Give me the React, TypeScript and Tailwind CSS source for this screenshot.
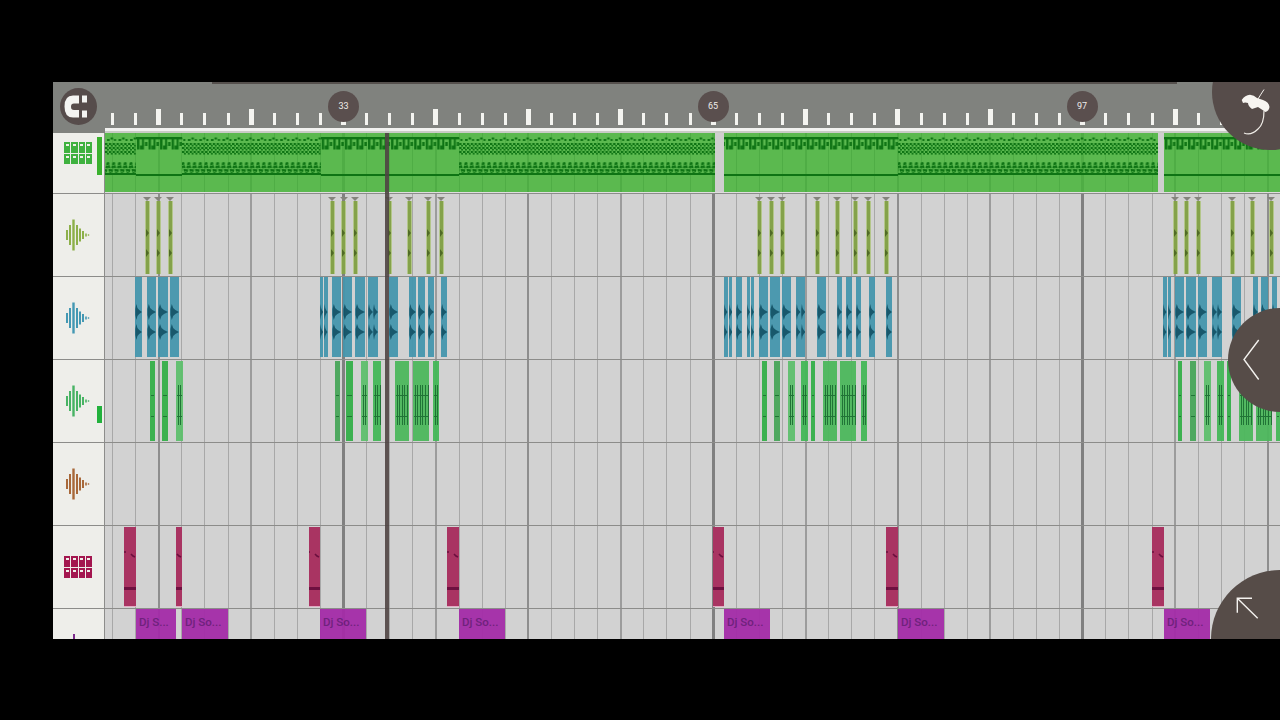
type Clip = [number, number, string?];

const BAR = 23.1;
const ORIGIN = 343.5;
const LANE_X = 105;

const gridIndexes = Array.from({ length: 51 }, (_, i) => i - 10);
const gridX = (k: number) => ORIGIN + BAR * k;

// x ranges are page pixels, converted to lane offsets when drawn
const kickX = [147, 158, 170, 332, 343.5, 355, 389, 409, 428, 441, 759, 771, 782, 817, 837, 855, 868, 886, 1175, 1186.5, 1198, 1232, 1252, 1271];

const blueClips: Clip[] = [
  [135, 142], [147, 156], [158, 168], [170, 179],
  [320, 323.2], [324, 327.5], [332, 341], [343, 352], [354.5, 364.5], [368, 373], [373, 378], [389, 398], [409, 416], [418, 425], [428, 434], [441, 447],
  [724, 727.5], [728.5, 732], [736, 742], [747, 750], [751, 754], [759, 768], [770, 780], [782, 791], [796, 800.5], [800.5, 805], [817, 826], [837, 842], [846, 852], [856, 861], [869, 875], [886, 892],
  [1163, 1166.5], [1167.5, 1170.5], [1175, 1184], [1186, 1196], [1198, 1207], [1212, 1217], [1217, 1222], [1232, 1241], [1253, 1258], [1261, 1268], [1272, 1277],
];

const greenClips: Clip[] = [
  [150, 154.5, 'a'], [162, 168, 'a'], [176, 183, 'l'],
  [335, 340, 'd'], [346, 353, 'a'], [361, 368, 'l'], [373, 381, 'h'], [395, 409, 'w'], [413, 429, 'w'], [433, 439, 'h'],
  [762, 767, 'a'], [774, 780, 'd'], [788, 795, 'l'], [801, 808, 'h'], [811, 815, 'a'], [823, 837, 'w'], [840, 856, 'w'], [861, 867, 'h'],
  [1178, 1182, 'a'], [1190, 1196, 'd'], [1204, 1211, 'l'], [1217, 1224, 'h'], [1227, 1231, 'a'], [1239, 1253, 'w'], [1256, 1272, 'w'], [1276, 1280, 'h'],
];

const pinkClips: Clip[] = [[124, 136], [176, 182], [309, 320], [447, 459], [713, 724], [886, 898], [1152, 1164]];

const purpleClips: Clip[] = [
  [136, 176, 'Dj S...'], [182, 228, 'Dj So...'], [320, 366, 'Dj So...'], [459, 505, 'Dj So...'],
  [724, 770, 'Dj So...'], [898, 944, 'Dj So...'], [1164, 1210, 'Dj So...'],
];

const greenTone: Record<string, string> = {
  a: 'bg-[#35b04a]',
  d: 'bg-[#48a65a]',
  l: 'bg-[#5fc06d]',
  h: 'bg-[#44b858]',
  w: 'bg-[#4db85d]',
};

const Waveform = ({ color }: { color: string }) => {
  const bars = [[1, 10, 2], [4, 20, 2], [7.5, 31, 2.4], [11, 20, 2], [14, 13, 2], [17, 8, 2], [20, 3, 1.6], [22.5, 1.5, 1.4]];
  return (
    <svg width="24" height="32" viewBox="0 0 24 32" className="ml-[13px]">
      {bars.map(([x, h, w]) => (
        <rect key={x} x={x - w / 2} y={16 - h / 2} width={w} height={h} fill={color} />
      ))}
    </svg>
  );
};

const PadGrid = ({ color }: { color: string }) => (
  <div className="ml-[11px] grid w-[28px] grid-cols-4 gap-[1px]">
    {Array.from({ length: 8 }, (_, i) => (
      <div key={i} className={`flex h-[10.5px] justify-center pt-[2px] ${color}`}>
        <div className="h-[2px] w-[3px] bg-[#f0f0ea]" />
      </div>
    ))}
  </div>
);

const GridLines = ({ green = false }: { green?: boolean }) => (
  <>
    {gridIndexes.map((k) => {
      const major = k % 16 === 0;
      const half = k % 8 === 0;
      const quarter = k % 4 === 0;
      const width = major ? 3 : half || quarter ? 2 : 1;
      const base = green
        ? 'bg-[#3e9c36]/40'
        : major
          ? 'bg-[#808080]'
          : half
            ? 'bg-[#8e8e8e]'
            : quarter
              ? 'bg-[#9c9c9c]'
              : 'bg-[#a8a8a8]';
      return (
        <div
          key={k}
          className={`absolute top-0 bottom-0 ${base}`}
          style={{ left: gridX(k) - LANE_X - width / 2, width }}
        />
      );
    })}
  </>
);

const Spike = () => (
  <svg width="100%" height="16" viewBox="0 0 10 16" preserveAspectRatio="none" className="block">
    <path d="M2 0 L3.5 4 L6 6 L10 8 L6 10 L3.5 12 L2 16 L0.5 11 L0.5 5 Z" fill="#0f5267" />
  </svg>
);

const KickClip = ({ x }: { x: number }) => (
  <div className="absolute top-[3px] flex h-[77px] w-[8px] flex-col items-center" style={{ left: x - LANE_X - 4 }}>
    <div className="h-0 w-0 border-x-[4px] border-t-[4px] border-x-transparent border-t-[#84847c]" />
    <div className="relative h-[73px] w-[5px] border-x border-[#b3c68a] bg-[#84a24a]">
      <div className="absolute top-[28px] left-0 h-0 w-0 border-y-[4px] border-l-[3px] border-y-transparent border-l-[#4f6a26]" />
      <div className="absolute top-[48px] left-0 h-0 w-0 border-y-[4px] border-l-[3px] border-y-transparent border-l-[#4f6a26]" />
    </div>
  </div>
);

const BlueClip = ({ from, to }: { from: number; to: number }) => (
  <div
    className="absolute top-0 flex h-[80px] flex-col bg-[#4597ae] pt-[27px] opacity-95"
    style={{ left: from - LANE_X, width: to - from }}
  >
    <Spike />
    <div className="h-[4px]" />
    <Spike />
  </div>
);

const GreenClip = ({ from, to, tone }: { from: number; to: number; tone: string }) => {
  const hatched = to - from > 5 && tone !== 'a' && tone !== 'd';
  const lines = hatched ? Array.from({ length: Math.floor((to - from) / 2.6) }, (_, i) => i) : [];
  return (
    <div
      className={`absolute top-[1px] h-[80px] opacity-95 ${greenTone[tone]}`}
      style={{ left: from - LANE_X, width: to - from }}
    >
      {lines.map((i) => (
        <div key={i} className="absolute top-[24px] h-[40px] w-[1px] bg-[#17702e]" style={{ left: 1.5 + i * 2.6 }} />
      ))}
      <div className="absolute top-[34px] left-[1px] right-[1px] h-[1px] bg-[#17702e]" />
      <div className="absolute top-[55px] left-[1px] right-[1px] h-[1px] bg-[#17702e]" />
    </div>
  );
};

const PinkClip = ({ from, to }: { from: number; to: number }) => (
  <div
    className="absolute top-[1px] h-[80px] border-b border-[#e3a9c2] bg-[#a93462]"
    style={{ left: from - LANE_X, width: to - from }}
  >
    <svg width="100%" height="8" viewBox="0 0 12 8" preserveAspectRatio="xMaxYMid slice" className="absolute top-[24px] left-0">
      <path d="M0 1 L2 1 M7 3 L9 5 L11 6" stroke="#6b0f3e" strokeWidth="1.6" fill="none" />
    </svg>
    <div className="absolute top-[60px] left-0 right-0 h-[3px] bg-[#6e1040]" />
  </div>
);

const PurpleClip = ({ from, to, label }: { from: number; to: number; label: string }) => (
  <div
    className="absolute top-0 bottom-0 bg-[#a42ca8] pt-[5px] pl-[3px] font-['Roboto',sans-serif] text-[11.5px] leading-[16px] font-medium whitespace-nowrap text-[#6a1878] opacity-95"
    style={{ left: from - LANE_X, width: to - from }}
  >
    {label}
  </div>
);

const Side = ({ children }: { children?: React.ReactNode }) => (
  <div className="relative flex w-[52px] shrink-0 items-center border-r border-[#8d8d8b] bg-[#eeeeea]">{children}</div>
);

const Row = ({ side, children, height }: { side?: React.ReactNode; children?: React.ReactNode; height: string }) => (
  <div className={`flex shrink-0 border-b border-[#8c8c8a] ${height}`}>
    <Side>{side}</Side>
    <div className="relative flex-1 overflow-hidden bg-[#d2d2d2]">
      <GridLines />
      {children}
    </div>
  </div>
);

const SongTrack = () => (
  <svg width="1175" height="59" className="absolute top-0 left-0 block">
    <defs>
      <pattern id="tone" x="31" y="0" width="11.55" height="20" patternUnits="userSpaceOnUse">
        <rect x="0" y="4" width="11.55" height="2.4" fill="#0e7414" />
        <rect x="1" y="6" width="2.4" height="10.5" fill="#0e7414" />
        <rect x="6" y="6" width="2" height="7" fill="#0e7414" />
        <rect x="4" y="12.5" width="4" height="4" fill="#0e7414" />
        <rect x="9" y="9" width="2.4" height="4" fill="#0e7414" />
      </pattern>
      <pattern id="dots" x="0" y="0" width="11.55" height="10" patternUnits="userSpaceOnUse">
        <rect x="2" y="6" width="2.6" height="2" fill="#0e7414" />
        <rect x="5.5" y="4.5" width="2.6" height="2" fill="#0e7414" />
        <rect x="9" y="6" width="2" height="2" fill="#0e7414" />
      </pattern>
      <pattern id="dense" x="0" y="10" width="3.85" height="4" patternUnits="userSpaceOnUse">
        <rect x="0" y="0" width="2.4" height="2" fill="#0e7414" />
        <rect x="2" y="2" width="1.8" height="1.6" fill="#0e7414" />
      </pattern>
      <pattern id="zigzag" x="0" y="27" width="5.775" height="15" patternUnits="userSpaceOnUse">
        <path d="M0 15 L2.9 2 L5.775 15" stroke="#0e7414" strokeWidth="2.2" strokeDasharray="2.6 0.8" fill="none" />
      </pattern>
    </defs>
    {[[0, 31], [77, 139], [354, 256], [793, 260]].map(([x, w]) => (
      <g key={x}>
        <rect x={x} y="0" width={w} height="10" fill="url(#dots)" />
        <rect x={x} y="10" width={w} height="12" fill="url(#dense)" />
        <rect x={x} y="27" width={w} height="15" fill="url(#zigzag)" />
        <rect x={x} y="40" width={w} height="2" fill="#0e7414" />
      </g>
    ))}
    {[[31, 46], [216, 138], [619, 174], [1059, 116]].map(([x, w]) => (
      <g key={x}>
        <rect x={x} y="0" width={w} height="17" fill="url(#tone)" />
        <rect x={x} y="41" width={w} height="2" fill="#0e7414" />
      </g>
    ))}
  </svg>
);

const TopLane = () => (
  <div className="flex h-[61px] shrink-0 border-b border-[#8c8c8a]">
    <Side>
      <div className="self-start pt-[9px]">
        <PadGrid color="bg-[#3eb13f]" />
      </div>
      <div className="absolute top-[4px] right-[2px] h-[38px] w-[5px] bg-[#3ab12e]" />
    </Side>
    <div className="relative flex-1 overflow-hidden bg-[#dedede]">
      <div className="absolute inset-x-0 top-0 h-[59px] bg-[#5bb94f]">
        <GridLines green />
      </div>
      <SongTrack />
      <div className="absolute top-0 left-[610px] h-[59px] w-[9px] bg-[#cfcfcf]" />
      <div className="absolute top-0 left-[1053px] h-[59px] w-[6px] bg-[#cfcfcf]" />
    </div>
  </div>
);

const Ruler = () => (
  <div className="relative h-[51px] shrink-0 bg-[#80827e]">
    <div className="ml-[159px] h-[2px] w-[965px] bg-[#55504d]" />
    {gridIndexes.map((k) => {
      const big = k % 4 === 0;
      const width = big ? 5 : 3;
      return (
        <div
          key={k}
          className={`absolute bottom-[8px] bg-[#f4f4f0] ${big ? 'h-[16px]' : 'h-[12px]'}`}
          style={{ left: gridX(k) - 53 - width / 2, width }}
        />
      );
    })}
    <div className="absolute right-0 bottom-0 left-[52px] h-[2px] bg-[#c9cbc6]" />
    <div className="absolute right-0 bottom-[2px] left-[52px] h-[3px] bg-[#f1f1ef]" />
    {[['33', 343.5], ['65', 713], ['97', 1082]].map(([label, x]) => (
      <div
        key={label}
        className="absolute top-[9px] flex h-[31px] w-[31px] items-center justify-center rounded-full bg-[#5a4f4e] font-['Roboto',sans-serif] text-[9px] text-[#efecea]"
        style={{ left: (x as number) - 53 - 15.5 }}
      >
        {label}
      </div>
    ))}
    <svg width="37" height="37" viewBox="0 0 37 37" className="absolute top-[6px] left-[7px]">
      <circle cx="18.5" cy="18.5" r="18.5" fill="#564c4b" />
      <path d="M19 7.5 H13 Q4.5 7.5 4.5 18.5 Q4.5 29.5 13 29.5 H19 V22 H14 Q11 22 11 18.8 Q11 15.5 14 15.5 H19 Z" fill="#f4f4f2" />
      <rect x="22" y="7.5" width="5" height="7" fill="#f4f4f2" />
      <rect x="22" y="22.5" width="5" height="7" fill="#f4f4f2" />
    </svg>
  </div>
);

const CornerButtons = () => (
  <>
    {/* playhead */}
    <div className="absolute top-[51px] bottom-0 left-[331.5px] w-[4px] bg-[#4f4442]/90" />

    {/* app logo, top right */}
    <svg width="70" height="70" viewBox="0 0 70 70" className="absolute top-0 right-0">
      <circle cx="60" cy="10" r="58" fill="#564c4a" />
      <path d="M54 7.5 Q51 12 48 17" stroke="#f5f2ee" strokeWidth="1" fill="none" />
      <path d="M31.7 18 Q35 13 40 12.7 Q44 13 47 16 L53 18 Q59 20 59.5 25 Q59 29 55.5 30 Q51 27 48 25 Q45 26 42 27 Q38 24 38 21 Q35 20 33 21 Z" fill="#f7f5f1" />
      <path d="M54 28.7 Q54 42 48 47 Q41 54 34 51" stroke="#f0ede8" strokeWidth="1.2" fill="none" />
    </svg>

    {/* collapse chevron */}
    <svg width="52" height="104" viewBox="0 0 52 104" className="absolute top-[226px] right-0">
      <circle cx="52" cy="52" r="52" fill="#564c48" />
      <path d="M30.7 32 L16 51.5 L30.7 71.5" stroke="#f4f2ef" strokeWidth="1.4" fill="none" />
    </svg>

    {/* arrow, bottom right */}
    <svg width="69" height="69" viewBox="0 0 69 69" className="absolute right-0 bottom-0">
      <circle cx="69" cy="69" r="69" fill="#564c48" />
      <path d="M41 28.3 H26.3 V42.7 M26.3 28.3 L46.7 48.3" stroke="#f4f2ef" strokeWidth="1.4" fill="none" />
    </svg>
  </>
);

const App = () => (
  <div className="h-[720px] w-[1280px] overflow-hidden bg-black pt-[82px] pl-[53px]">
    <div className="relative flex h-[557px] w-[1227px] flex-col overflow-hidden">
      <Ruler />
      <TopLane />
      <Row height="h-[83px]" side={<Waveform color="#8db04a" />}>
        {kickX.map((x) => <KickClip key={x} x={x} />)}
      </Row>
      <Row height="h-[83px]" side={<Waveform color="#4498b3" />}>
        {blueClips.map(([from, to]) => <BlueClip key={from} from={from} to={to} />)}
      </Row>
      <Row
        height="h-[83px]"
        side={
          <>
            <Waveform color="#48b364" />
            <div className="absolute top-[46px] right-[2px] h-[17px] w-[5px] bg-[#22b13c]" />
          </>
        }
      >
        {greenClips.map(([from, to, tone]) => <GreenClip key={from} from={from} to={to} tone={tone as string} />)}
      </Row>
      <Row height="h-[83px]" side={<Waveform color="#a8683a" />} />
      <Row height="h-[83px]" side={<PadGrid color="bg-[#a3164f]" />}>
        {pinkClips.map(([from, to]) => <PinkClip key={from} from={from} to={to} />)}
      </Row>
      <div className="flex min-h-0 flex-1">
        <Side>
          <div className="absolute top-[25px] left-[20px] h-[5px] w-[2px] bg-[#7c2a8c]" />
        </Side>
        <div className="relative flex-1 overflow-hidden bg-[#d2d2d2]">
          <GridLines />
          {purpleClips.map(([from, to, label]) => <PurpleClip key={from} from={from} to={to} label={label as string} />)}
        </div>
      </div>
      <CornerButtons />
    </div>
  </div>
);

export default App;
